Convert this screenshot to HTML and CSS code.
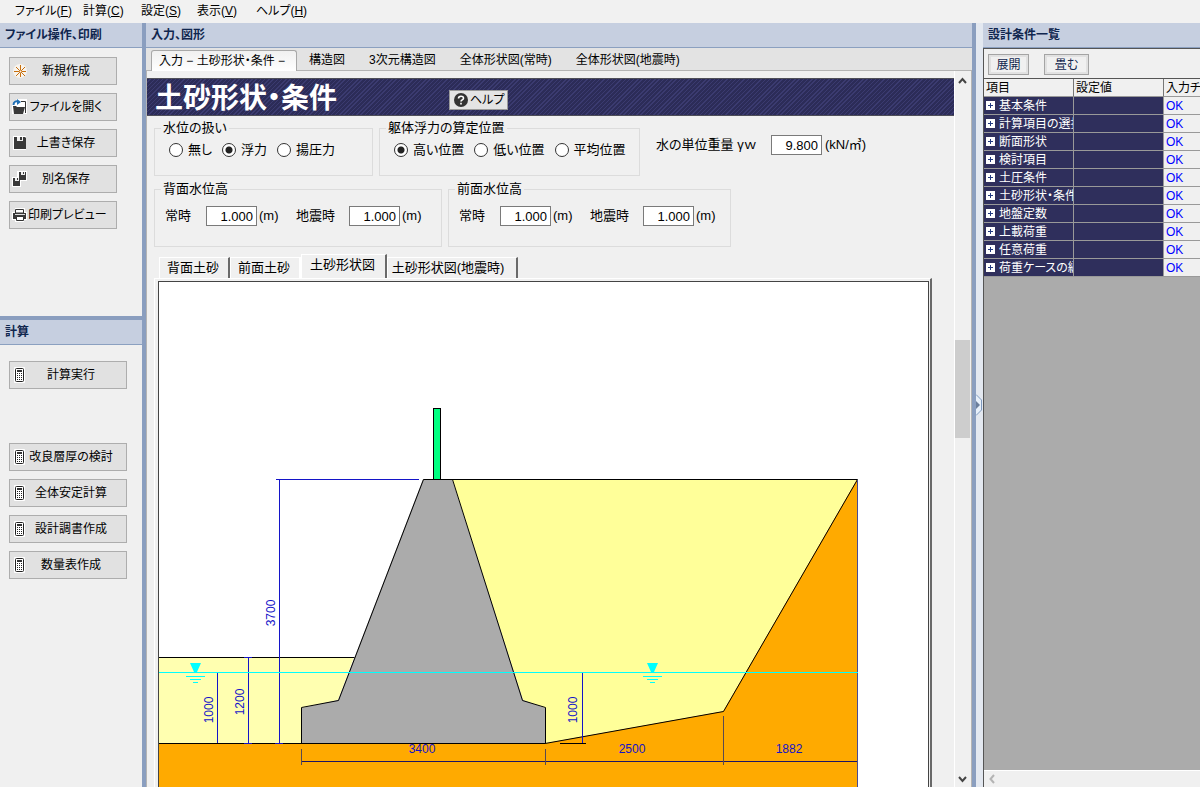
FILE: index.html
```html
<!DOCTYPE html>
<html lang="ja">
<head>
<meta charset="utf-8">
<title>土砂形状・条件</title>
<link rel="stylesheet" href="styles.css">
</head>
<body>
<svg class="defs" aria-hidden="true">
  <symbol id="calc" viewBox="0 0 16 16">
    <rect x="2" y="0" width="11" height="16" rx="1" fill="#fff"/>
    <rect x="3.500" y="1.500" width="8" height="13" rx="1" fill="#fff" stroke="#222"/>
    <path d="M5 4h5" stroke="#333" stroke-width="2"/>
    <path d="M5 6.500h5M5 8.500h5M5 10.500h5M5 12.500h5" stroke="#222" stroke-dasharray="1 1"/>
  </symbol>
  <symbol id="floppy" viewBox="0 0 16 16">
    <path d="M1 1h13v14H1z" fill="#fff"/>
    <path d="M2 2h11l1 1v11H2z" fill="#383838"/>
    <path d="M5 2h6v4H5z" fill="#eee"/>
    <path d="M8 2h2v3H8z" fill="#383838"/>
  </symbol>
  <symbol id="plus" viewBox="0 0 9 9">
    <path d="M0 0h9v9H0z" fill="#fff"/>
    <path d="M2 4.500h5M4.500 2v5" stroke="#223a80"/>
  </symbol>
</svg>

<nav class="menubar">
  <a href="#">ファイル(<u>F</u>)</a>
  <a href="#">計算(<u>C</u>)</a>
  <a href="#">設定(<u>S</u>)</a>
  <a href="#">表示(<u>V</u>)</a>
  <a href="#">ヘルプ(<u>H</u>)</a>
</nav>

<div class="workspace">
  <aside class="sidebar">
    <section class="file-pane">
      <h2 class="pane-title">ファイル操作、印刷</h2>
      <div class="actions file-actions">
        <button type="button" class="action">
          <svg class="icon" viewBox="0 0 16 16"><circle cx="8" cy="8" r="7" fill="#f8f4ee"/><path d="M8.500 2v12M2 8.500h12M4 4l9 9M13 4l-9 9" stroke="#c8700f"/><circle cx="8.500" cy="8.500" r="1" fill="#f8f4ee"/></svg>
          <span>新規作成</span>
        </button>
        <button type="button" class="action">
          <svg class="icon" viewBox="0 0 16 16"><path d="M0 6l5-6h10v15H0z" fill="#fff"/><path d="M9 2.500h4.500V14" fill="none" stroke="#333"/><path d="M1 7h3l1 1h8l-2 7H2z" fill="#383838"/><path d="M1.500 6C1.500 2.500 4 2 6 2.500" fill="none" stroke="#1f6fb5" stroke-width="2"/><path d="M5 0l4 3-4 3z" fill="#1f6fb5"/></svg>
          <span>ファイルを開く</span>
        </button>
        <button type="button" class="action">
          <svg class="icon"><use href="#floppy"/></svg>
          <span>上書き保存</span>
        </button>
        <button type="button" class="action">
          <svg class="icon" viewBox="0 0 16 16"><path d="M5 0h10v10H9v6H0V6h5z" fill="#fff"/><path d="M7 1h7v8H7zM1 7h7v8H1z" fill="#383838"/><path d="M9 1h4v3H9zM3 7h4v3H3z" fill="#eee"/><path d="M11 1h1v2h-1zM5 7h1v2H5z" fill="#383838"/></svg>
          <span>別名保存</span>
        </button>
        <button type="button" class="action">
          <svg class="icon" viewBox="0 0 16 16"><path d="M3 1h10v4h2v8h-3v2H3v-2H0V5h3z" fill="#fff"/><path d="M3.500 2.500h8V6h-8z" fill="#fff" stroke="#333"/><path d="M1 6h13v6H1z" fill="#383838"/><path d="M4.500 9.500h7v4h-7z" fill="#fff" stroke="#333"/><path d="M3 7.500h10" stroke="#ddd"/></svg>
          <span>印刷プレビュー</span>
        </button>
      </div>
    </section>
    <section class="calc-pane">
      <h2 class="pane-title">計算</h2>
      <div class="actions calc-actions">
        <button type="button" class="action run"><svg class="icon"><use href="#calc"/></svg><span>計算実行</span></button>
        <button type="button" class="action"><svg class="icon"><use href="#calc"/></svg><span>改良層厚の検討</span></button>
        <button type="button" class="action"><svg class="icon"><use href="#calc"/></svg><span>全体安定計算</span></button>
        <button type="button" class="action"><svg class="icon"><use href="#calc"/></svg><span>設計調書作成</span></button>
        <button type="button" class="action"><svg class="icon"><use href="#calc"/></svg><span>数量表作成</span></button>
      </div>
    </section>
  </aside>

  <main class="main">
    <h2 class="pane-title">入力、図形</h2>
    <div class="tabs" role="tablist">
      <button type="button" class="tab active" role="tab" aria-selected="true">入力 − 土砂形状・条件 −</button>
      <button type="button" class="tab" role="tab">構造図</button>
      <button type="button" class="tab" role="tab">3次元構造図</button>
      <button type="button" class="tab" role="tab">全体形状図(常時)</button>
      <button type="button" class="tab" role="tab">全体形状図(地震時)</button>
    </div>

    <div class="scroll-area">
      <div class="content">
        <header class="banner">
          <h1>土砂形状・条件</h1>
          <button type="button" class="help">
            <svg class="help-icon" viewBox="0 0 14 14"><circle cx="7" cy="7" r="7" fill="#333"/><path d="M4.500 5.500C4.500 2.500 9.500 2.500 9.500 5.300 9.500 7 7 6.800 7 8.600M7 9.800v1.700" fill="none" stroke="#fff" stroke-width="1.600"/></svg>
            <span>ヘルプ</span>
          </button>
        </header>

        <form class="form">
          <div class="form-row top">
            <fieldset class="group water">
              <legend>水位の扱い</legend>
              <div class="radios">
                <label><input type="radio" name="water">無し</label>
                <label><input type="radio" name="water" checked>浮力</label>
                <label><input type="radio" name="water">揚圧力</label>
              </div>
            </fieldset>
            <fieldset class="group buoyancy">
              <legend>躯体浮力の算定位置</legend>
              <div class="radios">
                <label><input type="radio" name="pos" checked>高い位置</label>
                <label><input type="radio" name="pos">低い位置</label>
                <label><input type="radio" name="pos">平均位置</label>
              </div>
            </fieldset>
            <div class="weight">
              <label for="gamma">水の単位重量 γｗ</label>
              <input id="gamma" class="num" type="text" value="9.800">
              <span>(kN/㎥)</span>
            </div>
          </div>
          <div class="form-row bottom">
            <fieldset class="group back">
              <legend>背面水位高</legend>
              <div class="levels">
                <label for="b1">常時</label><input id="b1" class="num" type="text" value="1.000"><span class="unit">(m)</span>
                <label for="b2">地震時</label><input id="b2" class="num" type="text" value="1.000"><span class="unit">(m)</span>
              </div>
            </fieldset>
            <fieldset class="group front">
              <legend>前面水位高</legend>
              <div class="levels">
                <label for="f1">常時</label><input id="f1" class="num" type="text" value="1.000"><span class="unit">(m)</span>
                <label for="f2">地震時</label><input id="f2" class="num" type="text" value="1.000"><span class="unit">(m)</span>
              </div>
            </fieldset>
          </div>
        </form>

        <div class="subtabs" role="tablist">
          <button type="button" class="subtab" role="tab">背面土砂</button>
          <button type="button" class="subtab" role="tab">前面土砂</button>
          <button type="button" class="subtab active" role="tab" aria-selected="true">土砂形状図</button>
          <button type="button" class="subtab wide" role="tab">土砂形状図(地震時)</button>
        </div>
        <div class="drawing">
          <div class="canvas">
            <svg class="section-view" viewBox="159 282 699 506" role="img" aria-label="土砂形状図">
              <path d="M159 743H545L723 711 857 479V788H159z" fill="#ffaa00"/>
              <path d="M159 657H354L338 700 302 708V743H159z" fill="#ffffb0"/>
              <path d="M452 479H857L723 711 545 743V708L523 700z" fill="#ffff99"/>
              <path d="M423 479H452L523 700 545 708V743H302V708L338 700z" fill="#ababab"/>
              <g fill="none" stroke="#000">
                <path d="M159 657.500H354.500M159 743.500H545L723.500 711.500 857.500 479.500H423.500L338.500 700.500 301.500 707.500V743"/>
                <path d="M452.500 479.500L522.500 700.500 545.500 707.500V743M560 743.500H586"/>
              </g>
              <rect x="433.500" y="408.500" width="7" height="71" fill="#00ff80" stroke="#000"/>
              <g fill="none" stroke="#1414c8">
                <path d="M276 479.500H419M279.500 479V743M248.500 657V743M217.500 672V743M582.500 672V743M244 657.500h8M244 743.500h8M275 743.500h8"/>
                <path d="M857.500 480V788" stroke="#4a4a90"/>
              </g>
              <path d="M301 761.500H857" stroke="#1c1464"/>
              <path d="M301.500 749V765M545.500 749V765M723.500 716V765" stroke="#5a4a50"/>
              <g stroke="#00ffff" fill="none">
                <path d="M159 672.500H858" stroke-width="1"/>
                <path d="M186 676.500h19M190 679.500h11M193 682.500h5M643 676.500h19M647 679.500h11M650 682.500h5"/>
              </g>
              <path d="M190 663h11l-4 9h-3zM647 663h11l-4 9h-3z" fill="#00ffff"/>
              <g class="dim">
                <text x="422" y="753">3400</text>
                <text x="632" y="753">2500</text>
                <text x="789" y="753">1882</text>
                <text transform="translate(275 613) rotate(-90)">3700</text>
                <text transform="translate(244 702) rotate(-90)">1200</text>
                <text transform="translate(213 710) rotate(-90)">1000</text>
                <text transform="translate(577 710) rotate(-90)">1000</text>
              </g>
            </svg>
          </div>
        </div>
      </div>
      <div class="vscroll">
        <button type="button" aria-label="上へ"><svg viewBox="0 0 15 16"><path d="M4 11l3.500-4 3.500 4" fill="none" stroke="#444" stroke-width="2"/></svg></button>
        <div class="track"><div class="thumb"></div></div>
        <button type="button" aria-label="下へ"><svg viewBox="0 0 15 16"><path d="M4 6l3.500 4L11 6" fill="none" stroke="#444" stroke-width="2"/></svg></button>
      </div>
    </div>
  </main>

  <div class="splitter">
    <svg viewBox="0 0 7 22"><path d="M0 .5L5.500 6v10L0 21.500" fill="#e8f0fa" stroke="#7f9abf"/><path d="M0 7l4 4-4 4z" fill="#6c7f9c"/></svg>
  </div>

  <aside class="summary">
    <h2 class="pane-title">設計条件一覧</h2>
    <div class="summary-body">
      <div class="toolbar">
        <button type="button">展開</button>
        <button type="button" class="fold">畳む</button>
      </div>
      <div class="grid">
        <table>
          <thead><tr><th>項目</th><th>設定値</th><th>入力チェック</th></tr></thead>
          <tbody>
            <tr><td><svg><use href="#plus"/></svg>基本条件</td><td></td><td>OK</td></tr>
            <tr><td><svg><use href="#plus"/></svg>計算項目の選択</td><td></td><td>OK</td></tr>
            <tr><td><svg><use href="#plus"/></svg>断面形状</td><td></td><td>OK</td></tr>
            <tr><td><svg><use href="#plus"/></svg>検討項目</td><td></td><td>OK</td></tr>
            <tr><td><svg><use href="#plus"/></svg>土圧条件</td><td></td><td>OK</td></tr>
            <tr><td><svg><use href="#plus"/></svg>土砂形状・条件</td><td></td><td>OK</td></tr>
            <tr><td><svg><use href="#plus"/></svg>地盤定数</td><td></td><td>OK</td></tr>
            <tr><td><svg><use href="#plus"/></svg>上載荷重</td><td></td><td>OK</td></tr>
            <tr><td><svg><use href="#plus"/></svg>任意荷重</td><td></td><td>OK</td></tr>
            <tr><td><svg><use href="#plus"/></svg>荷重ケースの編集</td><td></td><td>OK</td></tr>
          </tbody>
        </table>
      </div>
      <div class="hscroll">
        <button type="button" aria-label="左へ"><svg viewBox="0 0 16 16"><path d="M10 4L6.500 8l3.500 4" fill="none" stroke="#b4b4b4" stroke-width="2"/></svg></button>
      </div>
    </div>
  </aside>
</div>
</body>
</html>
```
FILE: styles.css
```css
* { box-sizing: border-box; }

body {
  margin: 0;
  height: 100vh;
  display: flex;
  flex-direction: column;
  overflow: hidden;
  background: #f0f0f0;
  color: #000;
  font-family: "Liberation Sans", "Noto Sans CJK JP", sans-serif;
  font-feature-settings: "palt";
  font-size: 12px;
  line-height: 16px;
  white-space: nowrap;
}

button, input { font: inherit; font-feature-settings: inherit; color: inherit; }
button { padding: 0; border: 0; background: none; white-space: nowrap; }
svg { display: block; flex: none; }
.defs { position: absolute; width: 0; height: 0; }

.menubar {
  flex: none;
  height: 23px;
  padding: 3px 0 0 15px;
  display: grid;
  grid-template-columns: 68px 58px 56px 59px auto;
  justify-content: start;
  background: #f1f1f1;
}
.menubar a { color: #000; text-decoration: none; }

.workspace { flex: 1; min-height: 0; display: flex; }

.pane-title {
  flex: none;
  margin: 0;
  height: 25px;
  padding: 4px 5px;
  background: #c6cfe0;
  border-bottom: 1px solid #8ba0c0;
  color: #10264e;
  font-size: 12px;
  font-weight: bold;
}

/* Left column */
.sidebar {
  flex: none;
  width: 146px;
  display: flex;
  flex-direction: column;
  border-right: 4px solid #8a9ebf;
}
.file-pane { flex: none; height: 293px; }
.calc-pane { flex: 1; border-top: 4px solid #8a9ebf; }
.actions { display: flex; flex-direction: column; gap: 8px; }
.file-actions { width: 117px; padding: 9px 0 0 9px; }
.calc-actions { width: 127px; padding: 16px 0 0 9px; }
.action {
  height: 28px;
  padding: 0 12px 0 2px;
  display: flex;
  align-items: center;
  background: #e1e1e1;
  border: 1px solid #adadad;
}
.action span { flex: 1; text-align: center; }
.action.run { margin-bottom: 46px; }
.icon { width: 16px; height: 16px; }

/* Centre column */
.main { flex: 1; min-width: 0; display: flex; flex-direction: column; }
.tabs {
  flex: none;
  height: 23px;
  padding: 2px 0 0 5px;
  display: flex;
  background: #e3e3e3;
  border-bottom: 1px solid #b4b4b4;
}
.tab { height: 20px; padding: 0 12px; line-height: 20px; }
.tab.active {
  width: 146px;
  height: 21px;
  padding: 0 7px;
  text-align: left;
  background: linear-gradient(#f0f0f0, #fff);
  border: 1px solid #a8a8a8;
  border-bottom: 0;
  border-radius: 3px 3px 0 0;
}

.scroll-area {
  flex: 1;
  min-height: 0;
  display: flex;
  border-left: 1px solid #b4b4b4;
  border-right: 1px solid #b4b4b4;
}
.content {
  flex: 1;
  min-width: 0;
  padding-top: 7px;
  display: flex;
  flex-direction: column;
  overflow: hidden;
  font-size: 13px;
}
.banner {
  flex: none;
  height: 38px;
  padding-left: 8px;
  display: flex;
  align-items: center;
  background: repeating-linear-gradient(135deg, #2c2c58 0 2px, #3b3b70 2px 3px);
  border: 1px solid #4e4e58;
  border-width: 1px 0;
}
.banner h1 {
  width: 294px;
  margin: 0;
  padding-top: 4px;
  color: #fff;
  font-size: 28px;
  line-height: 32px;
  font-weight: bold;
}
.help {
  width: 59px;
  height: 20px;
  margin-top: 6px;
  padding: 0 4px;
  display: flex;
  align-items: center;
  gap: 2px;
  background: #e4e4e4;
  border: 1px solid #9a9a9a;
  font-size: 12px;
}
.help-icon { width: 14px; height: 14px; }

.form { flex: none; margin: 0; padding: 4px 7px 0; }
.form-row { display: flex; gap: 6px; }
.form-row.bottom { margin-top: 5px; }
.group {
  flex: none;
  min-width: 0;
  margin: 0;
  padding: 0 0 0 10px;
  border: 1px solid #dcdcdc;
}
.group legend { margin-left: -4px; padding: 0 2px; line-height: 16px; }
.top .group { height: 56px; }
.bottom .group { height: 66px; }
.water { width: 219px; }
.buoyancy { width: 261px; }
.back { width: 288px; }
.front { width: 283px; }

.radios { height: 27px; padding-left: 4px; display: flex; align-items: center; gap: 10px; }
.radios label { display: flex; align-items: center; gap: 5px; }
input[type="radio"] {
  appearance: none;
  width: 14px;
  height: 14px;
  margin: 0;
  border: 1px solid #333;
  border-radius: 50%;
  background: #fff;
}
input[type="radio"]:checked { background: radial-gradient(circle, #222 0 3px, #fff 4px); }

.num {
  width: 51px;
  height: 20px;
  margin: 0;
  padding: 0 3px;
  text-align: right;
  background: #fff;
  border: 1px solid #7a7a7a;
  border-radius: 0;
}
.weight { height: 50px; margin-left: 10px; display: flex; align-items: center; gap: 3px; }
.weight label { width: 112px; }
.levels { height: 38px; display: flex; align-items: center; }
.levels label { width: 41px; }
.levels .unit { width: 39px; padding-left: 2px; }
.levels .unit + label { width: 53px; }
.levels .unit:last-child { width: auto; }

.subtabs { flex: none; height: 31px; padding-left: 12px; display: flex; align-items: flex-end; }
.subtab {
  width: 71px;
  height: 21px;
  padding-right: 2px;
  border: 1px solid #fff;
  border-right: 2px solid #6a6a6a;
  border-bottom: 0;
}
.subtab:nth-child(2) { border-right-color: #fff; }
.subtab.active { width: 86px; height: 24px; padding-bottom: 3px; }
.subtab.wide { width: 131px; padding-right: 8px; }
.drawing {
  flex: 1;
  min-height: 0;
  margin: 0 22px 0 7px;
  padding: 2px 1px 0 3px;
  display: flex;
  border: 1px solid #fff;
  border-right: 2px solid #696969;
  border-bottom: 0;
}
.canvas {
  flex: 1;
  min-width: 0;
  overflow: hidden;
  background: #fff;
  border: 1px solid #444;
  border-bottom: 0;
}
.section-view { width: 699px; height: 506px; }
.dim text { fill: #1414c8; font-size: 12px; text-anchor: middle; }

.vscroll {
  flex: none;
  width: 17px;
  padding-right: 1px;
  display: flex;
  flex-direction: column;
  border-left: 1px solid #fff;
  background: #f0f0f0;
}
.vscroll button { height: 17px; }
.vscroll svg { width: 15px; height: 16px; }
.track { flex: 1; padding-top: 252px; }
.thumb { height: 98px; background: #cdcdcd; }

/* Right column */
.splitter {
  flex: none;
  width: 11px;
  display: flex;
  align-items: center;
  background: #e3e8f0;
  border-left: 4px solid #8a9ebf;
}
.splitter svg { width: 7px; height: 22px; }

.summary { flex: none; width: 217px; display: flex; flex-direction: column; overflow: hidden; }
.summary-body {
  flex: 1;
  min-height: 0;
  display: flex;
  flex-direction: column;
  background: #ababab;
  border-left: 1px solid #555;
}
.toolbar {
  flex: none;
  height: 31px;
  padding: 5px 4px;
  display: flex;
  gap: 15px;
  background: #f0f0f0;
  border-top: 1px solid #555;
  border-bottom: 1px solid #555;
}
.toolbar button {
  width: 41px;
  height: 21px;
  background: #f0f0f0;
  border: 1px solid #a4a4a4;
  box-shadow: inset 0 0 0 2px #e1e1e1;
  color: #10264e;
}
.toolbar .fold { width: 45px; }

.grid { flex: 1; min-height: 0; overflow: hidden; }
.grid table { width: 270px; table-layout: fixed; border-collapse: separate; border-spacing: 0; }
.grid th, .grid td {
  height: 18px;
  padding: 0 2px;
  overflow: hidden;
  text-align: left;
  font-weight: normal;
  line-height: 16px;
  border-right: 1px solid #999;
  border-bottom: 1px solid #999;
}
.grid th { background: #f0f0f0; border-right-color: #777; }
.grid td { background: #2f2f5c; color: #fff; }
.grid td:last-child { background: #f0f0f0; color: #0000ff; }
.grid td svg { display: inline-block; width: 9px; height: 9px; margin-right: 4px; vertical-align: 0; }

.hscroll { flex: none; height: 17px; background: #f0f0f0; border-top: 1px solid #fff; }
.hscroll svg { width: 16px; height: 16px; }
```
